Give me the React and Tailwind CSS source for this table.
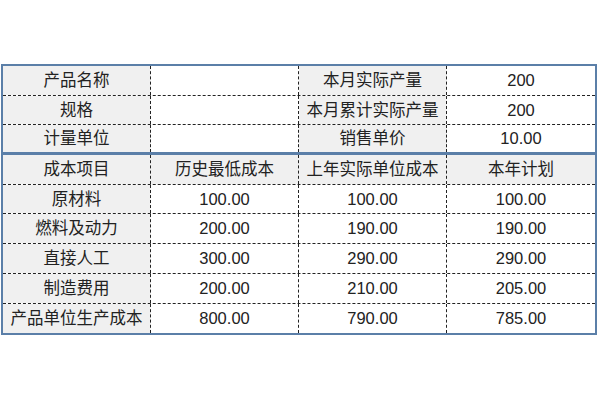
import React from "react";

const top = [
  ["产品名称", "", "本月实际产量", "200"],
  ["规格", "", "本月累计实际产量", "200"],
  ["计量单位", "", "销售单价", "10.00"],
];

const head = ["成本项目", "历史最低成本", "上年实际单位成本", "本年计划"];

const body = [
  ["原材料", "100.00", "100.00", "100.00"],
  ["燃料及动力", "200.00", "190.00", "190.00"],
  ["直接人工", "300.00", "290.00", "290.00"],
  ["制造费用", "200.00", "210.00", "205.00"],
  ["产品单位生产成本", "800.00", "790.00", "785.00"],
];

const Cell = ({ text, gray, last }) => (
  <div
    className={
      "h-full flex items-center justify-center whitespace-nowrap " +
      (gray ? "bg-[#f0f0f0] " : "bg-white ") +
      (last ? "" : "border-r border-dashed border-[#222]")
    }
  >
    {text}
  </div>
);

const Row = ({ cells, grayCols, bottom }) => (
  <div
    className={
      "grid grid-cols-4 h-[29.7px] " +
      (bottom === "thick"
        ? "border-b-[3px] border-solid border-[#5b7fa8]"
        : bottom === "dash"
        ? "border-b border-dashed border-[#222]"
        : "")
    }
  >
    {cells.map((c, i) => (
      <Cell key={i} text={c} gray={grayCols.includes(i)} last={i === 3} />
    ))}
  </div>
);

export default function App() {
  return (
    <div className="w-[600px] h-[400px] bg-white pt-[64px] pl-px">
      <div
        className="w-[596px] border-2 border-[#5b7fa8] text-[16.5px] text-[#222]"
        style={{ fontFamily: '"Liberation Sans", "Noto Sans CJK SC", sans-serif' }}
      >
        {top.map((r, i) => (
          <Row key={i} cells={r} grayCols={[0, 2]} bottom={i === 2 ? "thick" : "dash"} />
        ))}
        <Row cells={head} grayCols={[0, 1, 2, 3]} bottom="dash" />
        {body.map((r, i) => (
          <Row key={i} cells={r} grayCols={[0]} bottom={i === body.length - 1 ? "" : "dash"} />
        ))}
      </div>
    </div>
  );
}
